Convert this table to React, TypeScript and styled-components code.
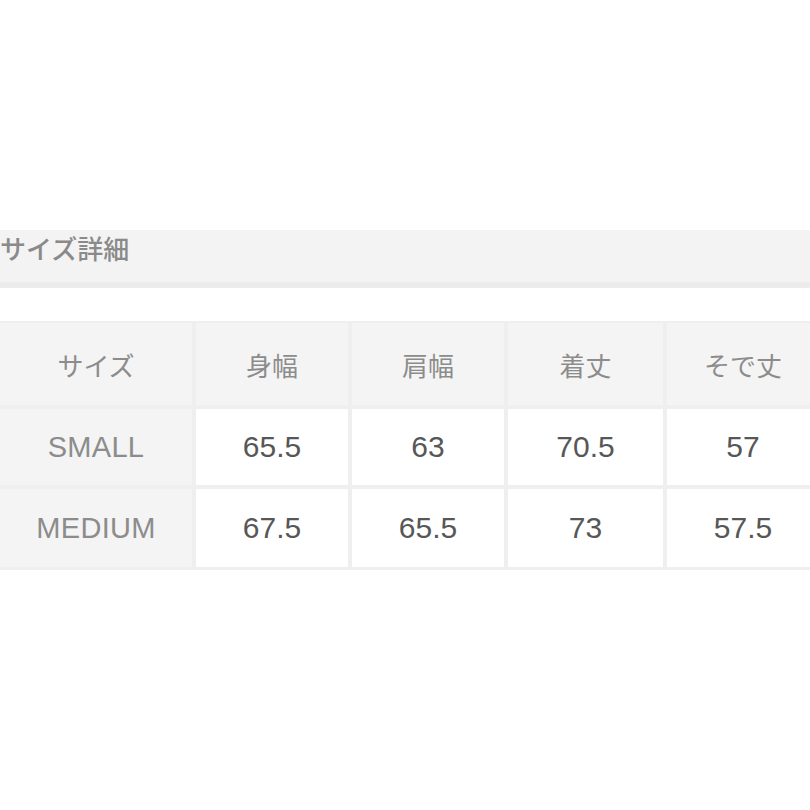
import styled, { createGlobalStyle } from "styled-components";

const Global = createGlobalStyle`
    html, body {
        margin: 0;
        padding: 0;
        background: #ffffff;
    }
    body {
        width: 810px;
        height: 810px;
        overflow: hidden;
        font-family: "Liberation Sans", "Noto Sans CJK JP", sans-serif;
    }
`
const Page = styled.div`
    padding-top: 230px;
    display: flex;
    flex-direction: column;
`
const Heading = styled.div`
    height: 58px;
    box-sizing: border-box;
    padding-top: 2px;
    background-color: #f3f3f3;
    border-bottom: 6px solid #ececec;
    display: flex;
    align-items: flex-start;
    font-size: 26px;
    line-height: 32px;
    color: #8a8a8a;
    font-family: "Noto Sans CJK JP", sans-serif;
    font-weight: 500;
`
const Table = styled.div`
    margin-top: 33px;
    display: grid;
    grid-template-columns: 192px 152px 152px 155px 152px;
    grid-template-rows: 82px 76px 78px;
    gap: 4px;
    padding: 2px 0 3px 0;
    width: 830px;
    background-color: #efefef;
`
const Cell = styled.div<{ $head?: boolean }>`
    display: flex;
    align-items: center;
    justify-content: center;
    background-color: ${p => p.$head ? "#f4f4f4" : "#ffffff"};
    color: ${p => p.$head ? "#8c8c8c" : "#575757"};
    font-size: ${p => p.$head ? "26px" : "30px"};
    font-family: ${p => p.$head ? `"Noto Sans CJK JP", sans-serif` : `"Liberation Sans", "Noto Sans CJK JP", sans-serif`};
`
const SizeName = styled.div`
    display: flex;
    align-items: center;
    justify-content: center;
    background-color: #f4f4f4;
    color: #8c8c8c;
    font-size: 29px;
    letter-spacing: 0.3px;
    font-family: "Liberation Sans", sans-serif;
`

const header = ["サイズ", "身幅", "肩幅", "着丈", "そで丈"]
const rows = [
    { name: "SMALL", values: ["65.5", "63", "70.5", "57"] },
    { name: "MEDIUM", values: ["67.5", "65.5", "73", "57.5"] },
]

export default function App() {
    return (
        <>
            <Global />
            <Page>
                <Heading>サイズ詳細</Heading>
                <Table>
                    {header.map(h => <Cell $head key={h}>{h}</Cell>)}
                    {rows.map(r => [
                        <SizeName key={r.name}>{r.name}</SizeName>,
                        ...r.values.map((v, i) => <Cell key={r.name + i}>{v}</Cell>),
                    ])}
                </Table>
            </Page>
        </>
    )
}
